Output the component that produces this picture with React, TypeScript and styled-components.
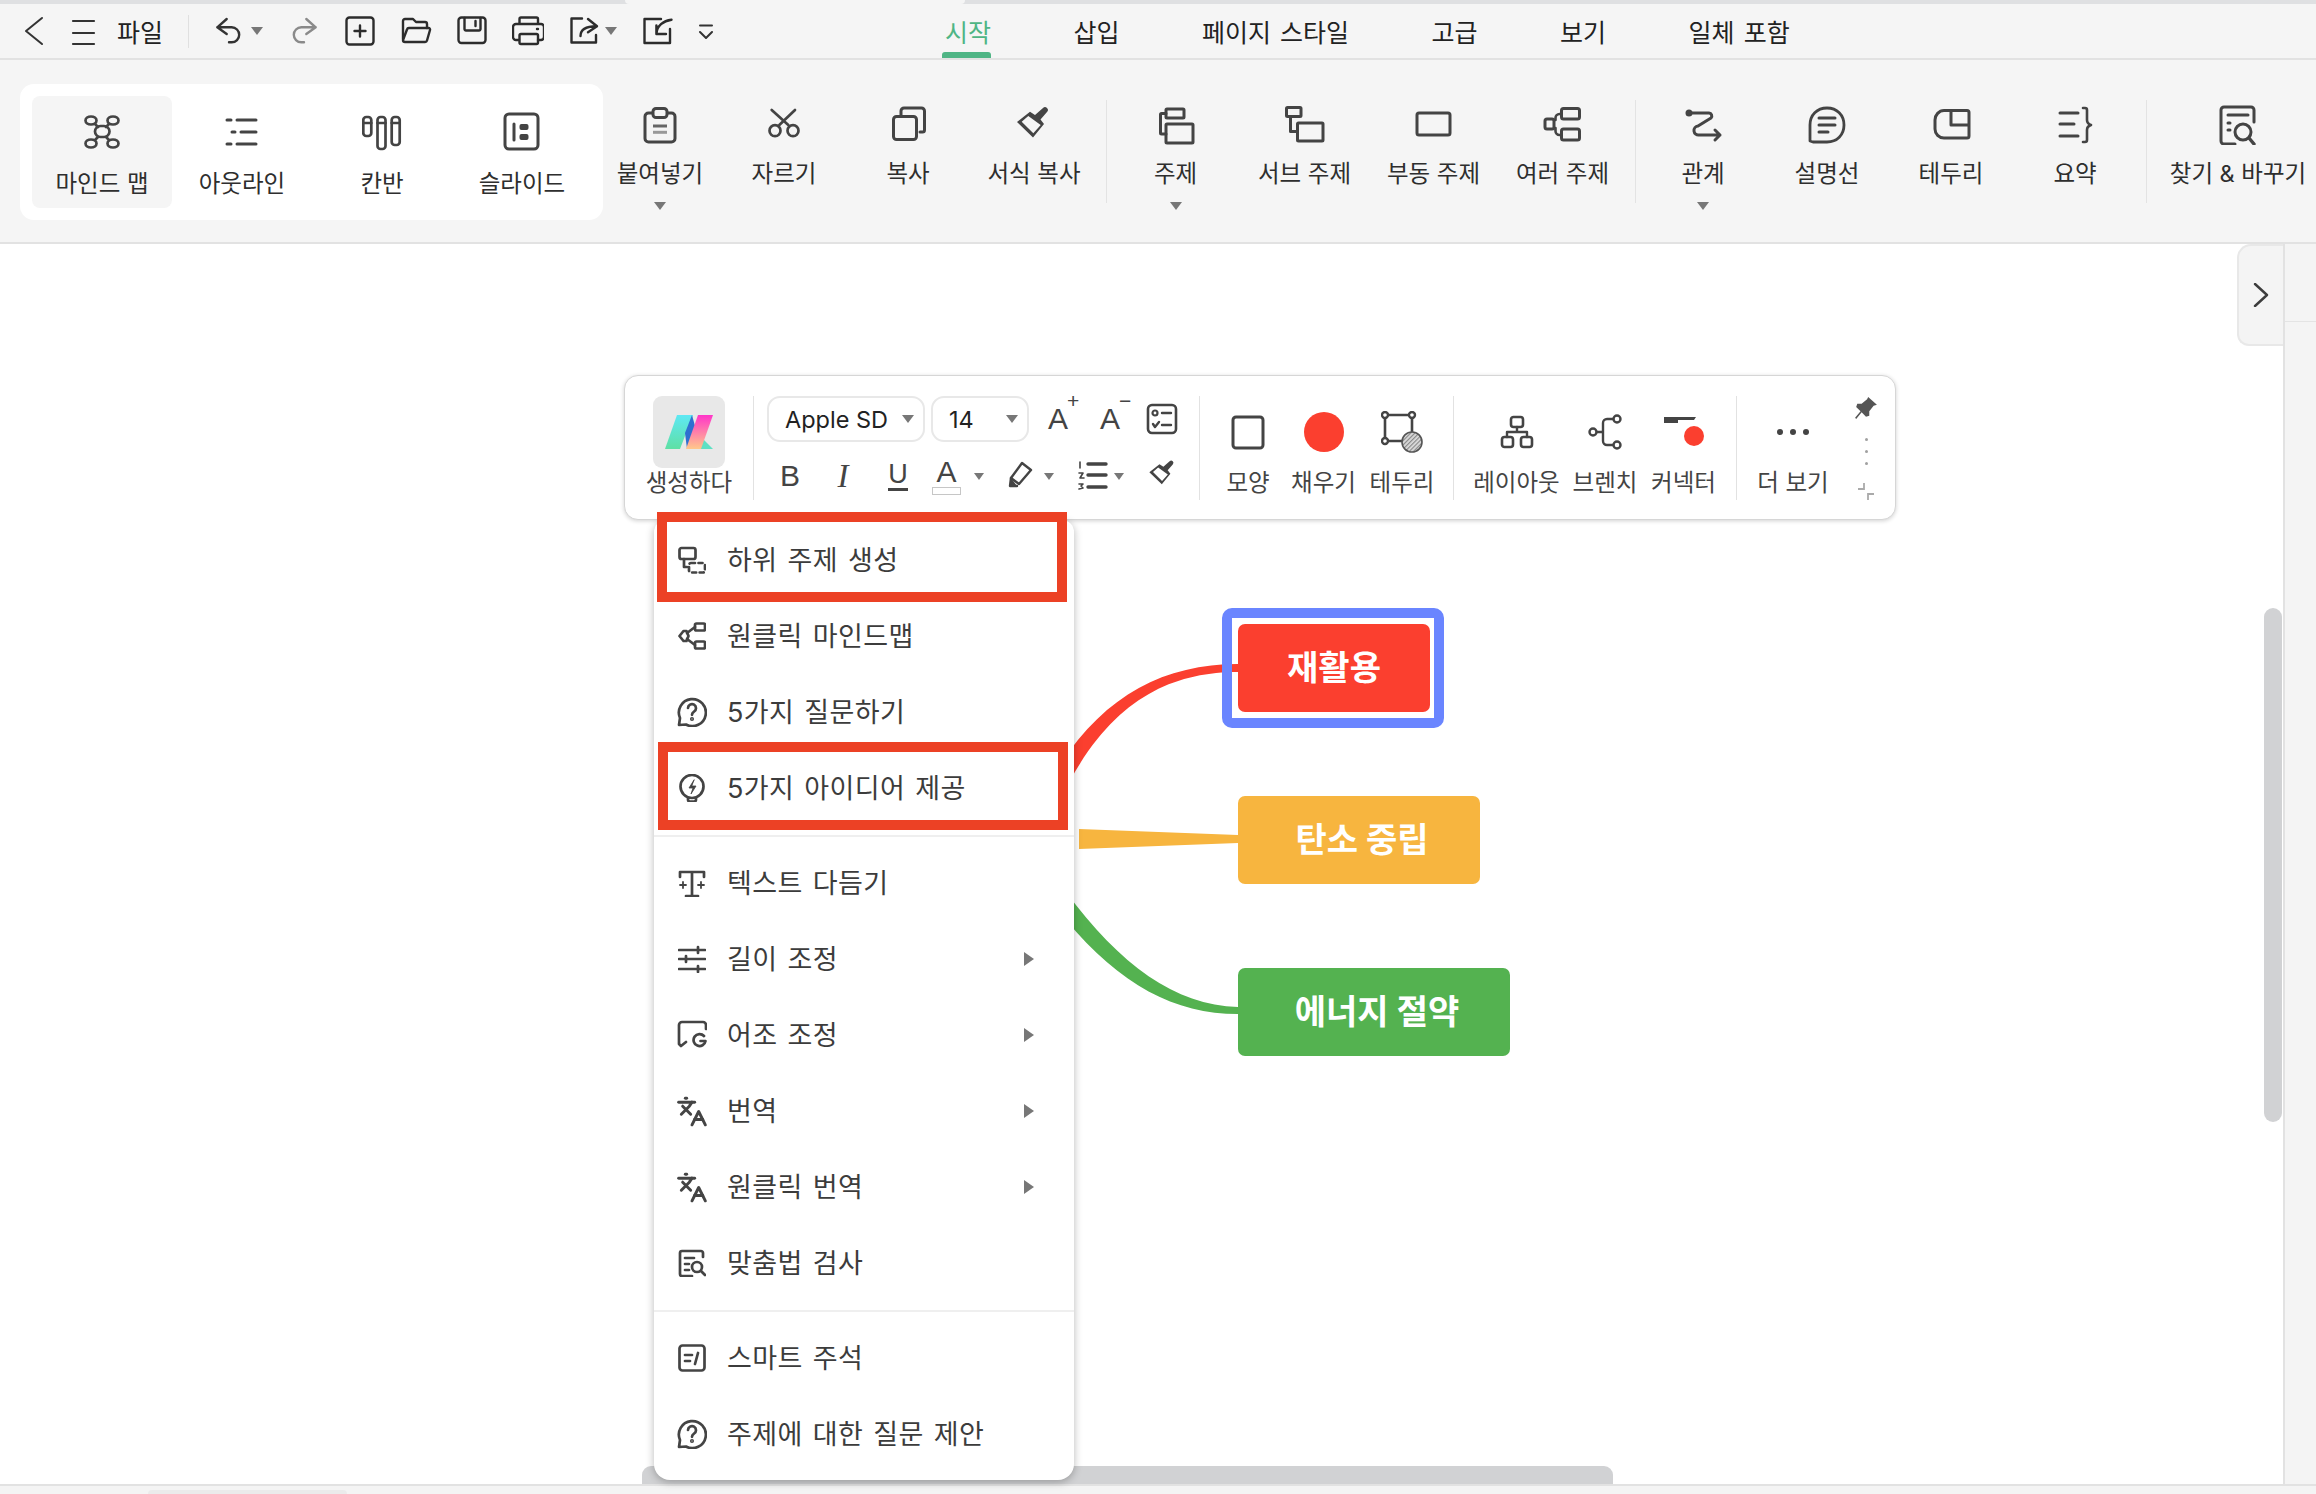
import * as React from "react";
import styled, { createGlobalStyle } from "styled-components";
import { Languages } from "lucide-react";

const GlobalStyle = createGlobalStyle`
  html, body {
    margin: 0;
    padding: 0;
    background: #fff;
    overflow: hidden;
  }
  * {
    box-sizing: border-box;
  }
  body {
    font-family: Inter, "Noto Sans CJK KR", sans-serif;
  }
`;

const Page = styled.div`
  display: flex;
  flex-direction: column;
  width: 2316px;
  height: 1494px;
  overflow: hidden;
`;

const TopStrip = styled.div`
  height: 4px;
  padding-left: 625px;
  background: #dfe0e2;
`;

const TopStripTab = styled.div`
  width: 340px;
  height: 4px;
  background: #f5f5f5;
  border-radius: 0 0 6px 6px;
`;

const MenuBar = styled.header`
  display: flex;
  align-items: center;
  height: 56px;
  padding-left: 8px;
  background: #f5f5f5;
  border-bottom: 2px solid #e2e2e2;
`;

const Slot = styled.div<{ $w: number; $ml?: number }>`
  display: flex;
  flex: none;
  align-items: center;
  justify-content: center;
  width: ${p => p.$w}px;
  margin-left: ${p => p.$ml || 0}px;
`;

const FileText = styled.span`
  font-size: 25px;
  color: #222;
`;

const MenuSep = styled.div`
  flex: none;
  width: 1px;
  height: 33px;
  margin-left: 18px;
  background: #e0e0e0;
`;

const Tabs = styled.nav`
  display: flex;
  gap: 82.5px;
  height: 100%;
  margin-left: 218px;
`;

const Tab = styled.div<{ $active?: boolean }>`
  position: relative;
  display: flex;
  align-items: center;
  height: 100%;
  font-size: 25px;
  word-spacing: 2px;
  white-space: nowrap;
  color: ${p => (p.$active ? "#4fb585" : "#222")};
  &::after {
    content: "";
    display: ${p => (p.$active ? "block" : "none")};
    position: absolute;
    left: -3px;
    right: 0;
    bottom: 0;
    height: 6px;
    border-radius: 3px 3px 0 0;
    background: #4fb585;
  }
`;

const Ribbon = styled.section`
  display: flex;
  align-items: flex-start;
  flex: none;
  height: 184px;
  padding-left: 20px;
  background: #f5f5f5;
  border-bottom: 2px solid #e2e2e2;
`;

const ModePanel = styled.div`
  display: flex;
  flex: none;
  width: 583px;
  height: 136px;
  margin: 24px -5px 0 0;
  padding: 12px;
  background: #fff;
  border-radius: 14px;
`;

const ModeItem = styled.div<{ $active?: boolean }>`
  display: flex;
  flex: none;
  flex-direction: column;
  align-items: center;
  width: 140px;
  height: 112px;
  padding-top: 16px;
  border-radius: 8px;
  background: ${p => (p.$active ? "#f5f5f5" : "transparent")};
`;

const RibbonItem = styled.div<{ $w: number }>`
  display: flex;
  flex: none;
  flex-direction: column;
  align-items: center;
  width: ${p => p.$w}px;
  padding-top: 45px;
`;

const RibbonIcon = styled.div`
  display: flex;
  align-items: center;
  justify-content: center;
  height: 40px;
`;

const RibbonLabel = styled.div<{ $mt?: number }>`
  margin-top: ${p => p.$mt || 15}px;
  font-size: 23.5px;
  line-height: 28px;
  white-space: nowrap;
  color: #2e2e2e;
`;

const RibbonSep = styled.div<{ $ml: number; $mr: number }>`
  flex: none;
  width: 1px;
  height: 103px;
  margin: 40px ${p => p.$mr}px 0 ${p => p.$ml}px;
  background: #e3e3e3;
`;

const Caret = styled.span<{ $mt?: number; $ml?: number; $size?: number }>`
  display: inline-block;
  flex: none;
  width: 0;
  height: 0;
  margin-top: ${p => p.$mt || 0}px;
  margin-left: ${p => p.$ml || 0}px;
  border-left: ${p => p.$size || 6}px solid transparent;
  border-right: ${p => p.$size || 6}px solid transparent;
  border-top: ${p => (p.$size || 6) + 2}px solid #777;
`;

const Body = styled.div`
  display: flex;
  flex: 1;
  min-height: 0;
`;

const Canvas = styled.main`
  position: relative;
  flex: 1;
  background: #fff;
`;

const SidePanel = styled.aside`
  flex: none;
  width: 33px;
  background: #f4f4f4;
  border-left: 2px solid #e2e2e2;
`;

const SideTop = styled.div`
  height: 78px;
  border-bottom: 1px solid #e4e4e4;
`;

const CollapseTab = styled.div`
  position: absolute;
  top: 0;
  right: 0;
  display: flex;
  align-items: center;
  justify-content: center;
  width: 46px;
  height: 102px;
  background: #f4f4f4;
  border: 2px solid #e8e8e8;
  border-right: 0;
  border-radius: 14px 0 0 12px;
`;

const VScroll = styled.div`
  position: absolute;
  top: 364px;
  right: 1px;
  width: 18px;
  height: 514px;
  border-radius: 9px;
  background: #d1d2d4;
`;

const HScroll = styled.div`
  position: absolute;
  left: 642px;
  bottom: 0;
  width: 971px;
  height: 18px;
  border-radius: 9px 9px 0 0;
  background: #d1d2d4;
`;

const StatusBar = styled.footer`
  flex: none;
  height: 10px;
  padding: 4px 0 0 148px;
  background: #f4f4f4;
  border-top: 2px solid #e2e2e2;
`;

const StatusTab = styled.div`
  width: 199px;
  height: 4px;
  border-radius: 4px 4px 0 0;
  background: #ebebeb;
`;

const Links = styled.svg`
  position: absolute;
  left: 0;
  top: 0;
`;

const Node = styled.div<{ $x: number; $y: number; $w: number; $bg: string; $pl?: number }>`
  position: absolute;
  left: ${p => p.$x}px;
  top: ${p => p.$y}px;
  display: flex;
  align-items: center;
  justify-content: center;
  width: ${p => p.$w}px;
  height: 88px;
  padding-bottom: 6px;
  padding-left: ${p => p.$pl || 0}px;
  border-radius: 7px;
  background: ${p => p.$bg};
  font-size: 34px;
  font-weight: 700;
  white-space: nowrap;
  color: #fff;
`;

const NodeSelection = styled.div`
  position: absolute;
  left: 1222px;
  top: 364px;
  width: 222px;
  height: 120px;
  border: 10px solid #6a85ff;
  border-radius: 10px;
`;

const FloatBar = styled.div`
  position: absolute;
  left: 624px;
  top: 131px;
  display: flex;
  width: 1272px;
  height: 145px;
  padding-top: 20px;
  background: #fff;
  border: 1px solid #d6d6d6;
  border-radius: 14px;
  box-shadow: 0 1px 4px rgba(0, 0, 0, 0.18);
`;

const LogoCol = styled.div`
  display: flex;
  flex: none;
  flex-direction: column;
  align-items: center;
  width: 128px;
`;

const LogoBox = styled.div`
  display: flex;
  align-items: center;
  justify-content: center;
  width: 72px;
  height: 72px;
  border-radius: 9px;
  background: #e8e8e8;
`;

const FloatLabel = styled.div`
  margin-top: 1px;
  font-size: 23.5px;
  line-height: 28px;
  white-space: nowrap;
  color: #444;
`;

const FloatSep = styled.div`
  flex: none;
  width: 1px;
  height: 104px;
  background: #e2e2e2;
`;

const FormatCol = styled.div`
  display: flex;
  flex: none;
  flex-direction: column;
  width: 445px;
  padding-left: 13px;
`;

const FormatRow = styled.div<{ $h: number; $mt?: number }>`
  display: flex;
  align-items: center;
  height: ${p => p.$h}px;
  margin-top: ${p => p.$mt || 0}px;
`;

const Select = styled.div<{ $w: number; $mr?: number; $pl: number }>`
  display: flex;
  flex: none;
  align-items: center;
  justify-content: space-between;
  width: ${p => p.$w}px;
  height: 46px;
  margin-right: ${p => p.$mr || 0}px;
  padding: 0 9px 0 ${p => p.$pl}px;
  border: 2px solid #e8e8e8;
  border-radius: 13px;
  font-size: 23.5px;
  color: #222;
`;

const LetterTool = styled.span`
  position: relative;
  font-family: "Liberation Sans", sans-serif;
  font-size: 30px;
  color: #444;
  line-height: 32px;
`;

const LetterMark = styled.sup`
  position: absolute;
  top: -12px;
  left: 19px;
  font-size: 21px;
  line-height: 20px;
`;

const ItalicTool = styled(LetterTool)`
  font-family: "Liberation Serif", serif;
  font-style: italic;
  font-size: 33px;
`;

const UnderTool = styled(LetterTool)`
  font-size: 27px;
  border-bottom: 3px solid #444;
  line-height: 27px;
`;

const ColorTool = styled.div`
  display: flex;
  flex-direction: column;
  align-items: center;
  font-family: "Liberation Sans", sans-serif;
  font-size: 30px;
  line-height: 30px;
  color: #444;
`;

const ColorSwatch = styled.div`
  width: 29px;
  height: 8px;
  border: 1px solid #c6c6c6;
  background: #fff;
`;

const LabelTool = styled.div<{ $w: number }>`
  display: flex;
  flex: none;
  flex-direction: column;
  align-items: center;
  width: ${p => p.$w}px;
`;

const LabelToolIcon = styled.div`
  display: flex;
  align-items: center;
  justify-content: center;
  height: 72px;
`;

const FloatGroup = styled.div`
  display: flex;
  flex: none;
  margin-left: 10px;
  margin-right: 10px;
`;

const PinCol = styled.div`
  display: flex;
  flex: none;
  flex-direction: column;
  align-items: center;
  width: 40px;
  margin-left: -3px;
`;

const GripDots = styled.div`
  display: flex;
  flex-direction: column;
  gap: 9px;
  margin-top: 18px;
`;

const GripDot = styled.span`
  width: 3px;
  height: 3px;
  border-radius: 50%;
  background: #a0a0a0;
`;

const ResizeMark = styled.div`
  margin-top: 17px;
`;

const ContextMenu = styled.div`
  position: absolute;
  left: 654px;
  top: 276px;
  width: 420px;
  height: 960px;
  padding-top: 2px;
  background: #fff;
  border-radius: 12px 12px 16px 16px;
  box-shadow: 0 2px 8px rgba(0, 0, 0, 0.28);
`;

const MenuRow = styled.div`
  display: flex;
  align-items: center;
  height: 76px;
  padding: 0 40px 4px 22px;
  font-size: 27px;
  letter-spacing: 0.4px;
  word-spacing: 2px;
  color: #3c3c3c;
`;

const MenuIcon = styled.div`
  display: flex;
  flex: none;
  align-items: center;
  justify-content: center;
  width: 32px;
  margin-right: 19px;
  padding-top: 4px;
`;

const MenuText = styled.span`
  flex: 1;
  white-space: nowrap;
`;

const SubArrow = styled.span`
  flex: none;
  width: 0;
  height: 0;
  margin-top: 4px;
  border-top: 7px solid transparent;
  border-bottom: 7px solid transparent;
  border-left: 10px solid #777;
`;

const MenuDivider = styled.div`
  height: 2px;
  margin: 9px 0 8px;
  background: #efefef;
`;

const Highlight = styled.div<{ $x: number; $y: number; $h: number }>`
  position: absolute;
  left: ${p => p.$x}px;
  top: ${p => p.$y}px;
  width: 410px;
  height: ${p => p.$h}px;
  border: 10px solid #ec4125;
`;

const Line = styled.svg<{ $color?: string }>`
  display: block;
  flex: none;
  fill: none;
  stroke: ${p => p.$color || "#444"};
  stroke-width: 2.7;
  stroke-linecap: round;
  stroke-linejoin: round;
`;

// ribbon icons, 40px box
const Ic = ({ children, s = 40, color }: { children: React.ReactNode; s?: number; color?: string }) => (
  <Line width={s} height={s} viewBox={`0 0 ${s} ${s}`} $color={color}>
    {children}
  </Line>
);

const MindMapIcon = () => (
  <Ic>
    <ellipse cx="9" cy="8.5" rx="5.5" ry="4" /><ellipse cx="31" cy="8.5" rx="5.5" ry="4" />
    <ellipse cx="9" cy="31.500" rx="5.5" ry="4" /><ellipse cx="31" cy="31.500" rx="5.5" ry="4" />
    <rect x="13" y="14" width="14.500" height="11" rx="5.5" />
    <path d="M13 12l3 3M27 12l-3 3M13 28l3-3M27 28l-3-3" />
  </Ic>
);
const OutlineIcon = () => (
  <Ic>
    <path strokeWidth="3" d="M5 8h4M15 8h19M10 20h3M19 20h15M5 32h4M15 32h19" />
  </Ic>
);
const KanbanIcon = () => (
  <Ic>
    <rect x="1.300" y="5" width="8" height="19" rx="3" /><rect x="15.500" y="5" width="8" height="32" rx="3" /><rect x="29.700" y="5" width="8" height="28" rx="3" />
    <path d="M1.300 11h8M15.500 11h8M29.700 11h8" />
  </Ic>
);
const SlideIcon = () => (
  <Ic>
    <rect x="3" y="2" width="33" height="35" rx="4" strokeWidth="3" />
    <path d="M12 12v16" strokeWidth="3" />
    <rect x="17.500" y="12" width="9" height="6" rx="2" fill="#444" stroke="none" />
    <rect x="17.500" y="22" width="9" height="6" rx="2" fill="#444" stroke="none" />
  </Ic>
);
const PasteIcon = () => (
  <Ic>
    <rect x="5" y="8" width="30" height="29" rx="3.500" strokeWidth="3" />
    <rect x="13" y="3.500" width="14" height="9" rx="3" fill="#f5f5f5" strokeWidth="3" />
    <path d="M13 21h14" stroke="#666" strokeWidth="3" strokeLinecap="butt" />
    <path d="M13 27.300h14" stroke="#999" strokeWidth="3" strokeLinecap="butt" />
  </Ic>
);
const ScissorsIcon = () => (
  <Ic>
    <circle cx="11" cy="25.700" r="5.500" /><circle cx="29" cy="25.700" r="5.500" />
    <path d="M31 5 15.300 20M7.700 5 24.300 20" />
  </Ic>
);
const CopyIcon = () => (
  <Ic>
    <path d="M13 10V6a3 3 0 0 1 3-3h17.500a3 3 0 0 1 3 3v19a2 2 0 0 1-2 2H32" strokeWidth="3" />
    <rect x="5.500" y="11.500" width="23" height="23" rx="3" strokeWidth="3" />
  </Ic>
);
const BrushPath = () => (
  <path
    fill="#444"
    stroke="none"
    fillRule="evenodd"
    d="M3 17 16 6.700 21 10l8-7a2.500 2.500 0 0 1 4 4l-6.500 7.500 3.500 4.500-11 13.500zM7.700 16.700l6.600-5.700 12.400 9-7.400 8.300z"
  />
);
const BrushIcon = () => <Ic><BrushPath /></Ic>;
const TopicIcon = () => (
  <Ic>
    <rect x="10" y="4" width="18" height="9" rx="1" strokeWidth="3" />
    <rect x="10" y="19" width="27" height="19" rx="1" strokeWidth="3" />
    <path d="M10 8.500H5.500a1 1 0 0 0-1 1V28a1 1 0 0 0 1 1H10" strokeWidth="3" />
  </Ic>
);
const SubTopicIcon = () => (
  <Ic>
    <rect x="1.500" y="2.500" width="14.500" height="9" rx="1" strokeWidth="3" />
    <rect x="12.500" y="18" width="25.500" height="18" rx="1" strokeWidth="3" />
    <path d="M5.500 12v14.500h7" strokeWidth="3" />
  </Ic>
);
const FloatIcon = () => <Ic><rect x="3" y="8" width="33" height="22" rx="2" strokeWidth="3" /></Ic>;
const MultiIcon = () => (
  <Ic>
    <rect x="18.500" y="3.500" width="18" height="10.500" rx="2" strokeWidth="3" />
    <rect x="18.500" y="24" width="18" height="11" rx="2" strokeWidth="3" />
    <rect x="2" y="14" width="9" height="10" rx="2" strokeWidth="3" />
    <path d="M18.500 9h-2a4 4 0 0 0-4 4v2M18.500 30h-2a4 4 0 0 1-4-4v-3" strokeWidth="2.6" />
  </Ic>
);
const RelationIcon = () => (
  <Ic>
    <path d="M6 8h20a3 3 0 0 1 2 5l-13 8a4 4 0 0 0 1 9h21M32 25l5 5-5 5" strokeWidth="3" />
    <circle cx="6" cy="8" r="3.500" fill="#444" stroke="none" />
  </Ic>
);
const CalloutIcon = () => (
  <Ic>
    <path d="M3 36V20C3 10 10 3 20 3s17 7 17 17-7 17-17 17H6z" strokeWidth="2.8" />
    <path d="M12 13h16M12 20h16M12 27h9" strokeWidth="3" />
  </Ic>
);
const BoundaryIcon = () => (
  <Ic>
    <path d="M13 5.500h23a2 2 0 0 1 2 2V31a2 2 0 0 1-2 2H13c-5 0-9-4-9-9v-9c0-5 4-9.500 9-9.500z" strokeWidth="3" />
    <path d="M20 6v14h17" strokeWidth="3" />
  </Ic>
);
const SummaryIcon = () => (
  <Ic>
    <path d="M5 8h18M5 19h14M5 31h18" strokeWidth="3" />
    <path d="M28 3h2a2 2 0 0 1 2 2v10c0 3 1 4 4 5-3 1-4 2-4 5v10a2 2 0 0 1-2 2h-2" strokeWidth="2.6" />
  </Ic>
);
const FindIcon = () => (
  <Ic>
    <path d="M17 39H6a3 3 0 0 1-3-3V5a3 3 0 0 1 3-3h27a3 3 0 0 1 3 3v12" strokeWidth="3" />
    <path d="M10 10h20M10 18h2M10 25h2" strokeWidth="3" />
    <circle cx="25" cy="27" r="8" strokeWidth="3" /><path d="M31 33l5 6" strokeWidth="3.400" />
  </Ic>
);

// title bar icons, 32px box
const BackIcon = () => <Ic s={32} color="#333"><path d="M25 3 9 16l16 13" strokeWidth="2" /></Ic>;
const BurgerIcon = () => <Ic s={32} color="#333"><path d="M5 6h21M5 18h21M5 29h21" strokeWidth="2.200" /></Ic>;
const UndoIcon = () => <Ic s={32} color="#333"><path d="M14.700 4 5.300 12.300 14.700 19M5.300 12.300H19.700a7.500 7.500 0 0 1 0 15H17" strokeWidth="2.400" /></Ic>;
const RedoIcon = () => <Ic s={32} color="#8a8a8a"><path d="M17.300 4 26.700 12.300 17.300 19M26.700 12.300H12.300a7.500 7.500 0 0 0 0 15H15" strokeWidth="2.400" /></Ic>;
const NewIcon = () => <Ic s={32} color="#2c2c2c"><rect x="2.500" y="2.500" width="27" height="27" rx="3" strokeWidth="2.400" /><path d="M16 10.500v11M10.500 16h11" strokeWidth="2.400" /></Ic>;
const FolderIcon = () => (
  <Ic s={32} color="#2c2c2c">
    <path d="M3 24V6a2 2 0 0 1 2-2h8l3 3h9a2 2 0 0 1 2 2v4" strokeWidth="2.400" />
    <path d="M3 25a2 2 0 0 0 2 2h20a2 2 0 0 0 2-1.500L30 15a1.500 1.500 0 0 0-1.500-2H9a2 2 0 0 0-2 1.500z" strokeWidth="2.400" />
  </Ic>
);
const SaveIcon = () => (
  <Ic s={32} color="#2c2c2c">
    <rect x="2.500" y="2.500" width="27" height="25.500" rx="3" strokeWidth="2.400" />
    <path d="M8.500 3v11a1.500 1.500 0 0 0 1.500 1.500h13a1.500 1.500 0 0 0 1.500-1.500V3M19.500 6v5" strokeWidth="2.400" />
  </Ic>
);
const PrintIcon = () => (
  <Ic s={32} color="#2c2c2c">
    <path d="M7.500 9V4A1.500 1.500 0 0 1 9 2.500h15.500A1.500 1.500 0 0 1 26 4v5M7 25H4a3 3 0 0 1-3-3V12a3 3 0 0 1 3-3h25a3 3 0 0 1 3 3v10a3 3 0 0 1-3 3h-3M25 14h1" strokeWidth="2.400" />
    <rect x="7.500" y="19" width="18.500" height="10" rx="1.500" strokeWidth="2.400" />
  </Ic>
);
const ExportIcon = () => (
  <Ic s={32} color="#2c2c2c">
    <path d="M14 3.500H3.500V27.500H28V20" strokeWidth="2.400" />
    <path d="M12.500 21c0-6 4-9.700 16-9.700M20 4l9 7.300-9 6" strokeWidth="2.400" />
  </Ic>
);
const ImportIcon = () => (
  <Ic s={32} color="#2c2c2c">
    <path d="M20 4H3.500V28H29V14" strokeWidth="2.400" />
    <path d="M30.500 4.700c-8 1-15 6-15 14.300M15.400 10.500V19H25" strokeWidth="2.400" />
  </Ic>
);
const MoreDownIcon = () => <Ic s={16} color="#333"><path d="M2 2.500h12M2 9l6 6 6-6" strokeWidth="2" /></Ic>;

// floating toolbar
const LogoIcon = () => (
  <svg width="48" height="34" viewBox="0 0 48 34">
    <defs>
      <linearGradient id="lg1" x1="0" y1="0" x2="0" y2="1"><stop offset="0" stopColor="#5ee8f4" /><stop offset="1" stopColor="#5fe0a4" /></linearGradient>
      <linearGradient id="lg2" x1="0" y1="0" x2="0" y2="1"><stop offset="0" stopColor="#ff35c9" /><stop offset="1" stopColor="#ffc88a" /></linearGradient>
    </defs>
    <polygon points="12,0 28,0 15,34 0,34" fill="url(#lg1)" />
    <polygon points="27,0 33,22 22,34 20,18" fill="#2f6fd0" />
    <polygon points="34,20 48,34 36,34" fill="#5fe0c4" />
    <polygon points="33,0 48,0 36,34 21,34" fill="url(#lg2)" />
  </svg>
);
const ChecklistIcon = () => (
  <Ic s={32}>
    <rect x="2" y="2" width="28" height="28" rx="4" strokeWidth="2.600" />
    <circle cx="9" cy="10" r="2.500" strokeWidth="2.200" />
    <path d="M16 10h9M7 21l2 3 4-5M16 22h9" strokeWidth="2.400" />
  </Ic>
);
const MarkerIcon = () => (
  <Ic s={32}>
    <path d="M18 3l9 7-12 14-8-6z" strokeWidth="2.400" />
    <path d="M7 18l-1 8h7" fill="#444" strokeWidth="2.400" />
  </Ic>
);
const NumListIcon = () => (
  <Ic s={32}>
    <path d="M11 4h18M11 15h18M11 27h18" strokeWidth="3.400" />
    <path d="M3 2v6M2 13h4l-3 5h4M2 24h4l-2 2 2 2-4 1" strokeWidth="1.600" />
  </Ic>
);
const ShapeIcon = () => <Ic s={36}><rect x="3" y="3" width="30" height="31" rx="3" strokeWidth="3" /></Ic>;
const FillIcon = () => (
  <svg width="40" height="40" viewBox="0 0 40 40"><circle cx="20" cy="20" r="20" fill="#fb3f2f" /></svg>
);
const BorderToolIcon = () => (
  <Line width="42" height="42" viewBox="0 0 42 42">
    <defs>
      <pattern id="hatch" width="3" height="3" patternUnits="userSpaceOnUse" patternTransform="rotate(45)">
        <rect width="3" height="3" fill="#ddd" stroke="none" />
        <rect width="1.200" height="3" fill="#888" stroke="none" />
      </pattern>
    </defs>
    <rect x="4" y="4" width="27" height="26" strokeWidth="2.600" />
    <circle cx="4" cy="4" r="3" fill="#fff" strokeWidth="2.400" /><circle cx="31" cy="4" r="3" fill="#fff" strokeWidth="2.400" /><circle cx="4" cy="30" r="3" fill="#fff" strokeWidth="2.400" />
    <circle cx="31" cy="31" r="10" fill="url(#hatch)" stroke="#555" strokeWidth="1.600" />
  </Line>
);
const OrgIcon = () => (
  <Ic s={36}>
    <rect x="12" y="3" width="12" height="10" rx="2.500" strokeWidth="2.600" />
    <rect x="3" y="23" width="11" height="10" rx="2.500" strokeWidth="2.600" />
    <rect x="22" y="23" width="11" height="10" rx="2.500" strokeWidth="2.600" />
    <path d="M18 13v5M8 23v-5h20v5" strokeWidth="2.400" />
  </Ic>
);
const BranchIcon = () => (
  <Ic s={36}>
    <circle cx="6" cy="18" r="3.500" strokeWidth="2.400" /><circle cx="30" cy="5" r="3.500" strokeWidth="2.400" /><circle cx="30" cy="31" r="3.500" strokeWidth="2.400" />
    <path d="M10 18h5M26 5h-6a4 4 0 0 0-4 4v18a4 4 0 0 0 4 4h6" strokeWidth="2.400" />
  </Ic>
);
const ConnectorIcon = () => (
  <svg width="44" height="36" viewBox="0 0 44 36">
    <path d="M2 3h32l-2 3H16v3H2z" fill="#444" />
    <circle cx="32" cy="22" r="10" fill="#fb3f2f" />
  </svg>
);
const DotsIcon = () => (
  <svg width="34" height="8" viewBox="0 0 34 8">
    <circle cx="4" cy="4" r="3" fill="#444" /><circle cx="17" cy="4" r="3" fill="#444" /><circle cx="30" cy="4" r="3" fill="#444" />
  </svg>
);
const PinIcon = () => (
  <svg width="24" height="24" viewBox="0 0 22 22">
    <path d="M13 1l8 7-3 1-4 5 0 4-3 1-4-4-5 6-1-1 5-6-4-4 1-3h4l5-4z" fill="#555" />
  </svg>
);
const ResizeIcon = () => (
  <Ic s={20} color="#aaa">
    <path d="M2 7h6V1M12 18v-6h6" strokeWidth="1.800" strokeLinecap="butt" strokeLinejoin="miter" />
  </Ic>
);

// context menu icons, 28px box
const SubCreateIcon = () => (
  <Ic s={28}>
    <rect x="1.500" y="2" width="16" height="11" rx="2" />
    <rect x="11" y="17" width="16" height="9.500" rx="2" strokeDasharray="4 3.500" />
    <path d="M6 13v8h3" />
  </Ic>
);
const OneClickMapIcon = () => (
  <Ic s={28}>
    <path d="M1.500 14l4-5h3l2 5-2 5h-3z" />
    <rect x="17" y="1.500" width="10" height="7" rx="1.500" />
    <rect x="17" y="19.500" width="10" height="7" rx="1.500" />
    <path d="M9 11l8-6M9 17l8 6" />
  </Ic>
);
const AskIcon = () => (
  <Ic s={30}>
    <path d="M2 28l1-7a13.500 13.500 0 1 1 6 6.500z" />
    <path d="M11 11a4 4 0 1 1 6 3.600c-1.300.8-2 1.400-2 3.200" />
    <circle cx="15" cy="22" r="0.700" fill="#444" />
  </Ic>
);
const BulbIcon = () => (
  <Ic s={28}>
    <circle cx="14" cy="12.500" r="11.500" />
    <path d="M10 24v1.500a2 2 0 0 0 2 2h4a2 2 0 0 0 2-2V24" />
    <path d="M16 6l-5 8h4l-2 6 5-8h-4z" fill="#444" strokeWidth="0.800" />
  </Ic>
);
const TextFixIcon = () => (
  <Ic s={28}>
    <path d="M2 8V3h24v5M14 3v24M8 27h12" />
    <path d="M5 13v6M2 16h6M23 13v6M20 16h6" strokeWidth="1.800" />
  </Ic>
);
const SlidersIcon = () => (
  <Ic s={28}>
    <path d="M1 5h26M1 14h26M1 24h26M20 2v6M8 11v6M20 21v6" />
  </Ic>
);
const ToneIcon = () => (
  <Ic s={30}>
    <path d="M29 9V5a3 3 0 0 0-3-3H5a3 3 0 0 0-3 3v19l2 2 5-4" />
    <path d="M27 16a6 6 0 1 0 1.500 5h-5" />
  </Ic>
);
const SpellIcon = () => (
  <Ic s={28}>
    <path d="M25 8V4a2 2 0 0 0-2-2H4a2 2 0 0 0-2 2v21a2 2 0 0 0 2 2h10" />
    <path d="M7 9h9M7 15h4M7 21h4" />
    <circle cx="19" cy="18" r="5" /><path d="M23 22l4 4" strokeWidth="2.800" />
  </Ic>
);
const NoteIcon = () => (
  <Ic s={28}>
    <rect x="1.500" y="1.500" width="25" height="25" rx="3" />
    <path d="M7 11h7M7 17h5M20 9l-3 11" />
  </Ic>
);

const TranslateIcon = () => <Languages size={33} color="#444" strokeWidth={2.2} />;

const ModeItems = [
  { label: "마인드 맵", icon: <MindMapIcon />, active: true },
  { label: "아웃라인", icon: <OutlineIcon /> },
  { label: "칸반", icon: <KanbanIcon /> },
  { label: "슬라이드", icon: <SlideIcon /> },
];

type RibbonEntry = { label: string; icon: React.ReactNode; w: number; caret?: boolean };

const ribbonGroups: { items: RibbonEntry[]; ml: number; mr: number }[] = [
  {
    items: [
      { label: "붙여넣기", icon: <PasteIcon />, w: 124, caret: true },
      { label: "자르기", icon: <ScissorsIcon />, w: 124 },
      { label: "복사", icon: <CopyIcon />, w: 124 },
      { label: "서식 복사", icon: <BrushIcon />, w: 128 },
    ],
    ml: 8,
    mr: 4,
  },
  {
    items: [
      { label: "주제", icon: <TopicIcon />, w: 129, caret: true },
      { label: "서브 주제", icon: <SubTopicIcon />, w: 129 },
      { label: "부동 주제", icon: <FloatIcon />, w: 129 },
      { label: "여러 주제", icon: <MultiIcon />, w: 129 },
    ],
    ml: 8,
    mr: 5,
  },
  {
    items: [
      { label: "관계", icon: <RelationIcon />, w: 124, caret: true },
      { label: "설명선", icon: <CalloutIcon />, w: 124 },
      { label: "테두리", icon: <BoundaryIcon />, w: 124 },
      { label: "요약", icon: <SummaryIcon />, w: 124 },
    ],
    ml: 9,
    mr: 6,
  },
];

type MenuEntry = { label: string; icon: React.ReactNode; sub?: boolean };

const menuGroups: MenuEntry[][] = [
  [
    { label: "하위 주제 생성", icon: <SubCreateIcon /> },
    { label: "원클릭 마인드맵", icon: <OneClickMapIcon /> },
    { label: "5가지 질문하기", icon: <AskIcon /> },
    { label: "5가지 아이디어 제공", icon: <BulbIcon /> },
  ],
  [
    { label: "텍스트 다듬기", icon: <TextFixIcon /> },
    { label: "길이 조정", icon: <SlidersIcon />, sub: true },
    { label: "어조 조정", icon: <ToneIcon />, sub: true },
    { label: "번역", icon: <TranslateIcon />, sub: true },
    { label: "원클릭 번역", icon: <TranslateIcon />, sub: true },
    { label: "맞춤법 검사", icon: <SpellIcon /> },
  ],
  [
    { label: "스마트 주석", icon: <NoteIcon /> },
    { label: "주제에 대한 질문 제안", icon: <AskIcon /> },
  ],
];

const RibbonBlock = ({ entry }: { entry: RibbonEntry }) => (
  <RibbonItem $w={entry.w}>
    <RibbonIcon>{entry.icon}</RibbonIcon>
    <RibbonLabel>{entry.label}</RibbonLabel>
    {entry.caret && <Caret $mt={14} />}
  </RibbonItem>
);

export default function App() {
  return (
    <Page>
      <GlobalStyle />
      <TopStrip>
        <TopStripTab />
      </TopStrip>
      <MenuBar>
        <Slot $w={50}><BackIcon /></Slot>
        <Slot $w={52}><BurgerIcon /></Slot>
        <Slot $w={60}><FileText>파일</FileText></Slot>
        <MenuSep />
        <Slot $w={56} $ml={11}><UndoIcon /></Slot>
        <Slot $w={12} $ml={-5}><Caret /></Slot>
        <Slot $w={56} $ml={14}><RedoIcon /></Slot>
        <Slot $w={56} $ml={-1}><NewIcon /></Slot>
        <Slot $w={56}><FolderIcon /></Slot>
        <Slot $w={56}><SaveIcon /></Slot>
        <Slot $w={56}><PrintIcon /></Slot>
        <Slot $w={56}><ExportIcon /></Slot>
        <Slot $w={12} $ml={-7}><Caret /></Slot>
        <Slot $w={56} $ml={12}><ImportIcon /></Slot>
        <Slot $w={42}><MoreDownIcon /></Slot>
        <Tabs>
          <Tab $active>시작</Tab>
          <Tab>삽입</Tab>
          <Tab>페이지 스타일</Tab>
          <Tab>고급</Tab>
          <Tab>보기</Tab>
          <Tab>일체 포함</Tab>
        </Tabs>
      </MenuBar>

      <Ribbon>
        <ModePanel>
          {ModeItems.map(m => (
            <ModeItem key={m.label} $active={m.active}>
              <RibbonIcon>{m.icon}</RibbonIcon>
              <RibbonLabel $mt={18}>{m.label}</RibbonLabel>
            </ModeItem>
          ))}
        </ModePanel>
        {ribbonGroups.map(g => (
          <React.Fragment key={g.items[0].label}>
            {g.items.map(entry => (
              <RibbonBlock key={entry.label} entry={entry} />
            ))}
            <RibbonSep $ml={g.ml} $mr={g.mr} />
          </React.Fragment>
        ))}
        <RibbonBlock entry={{ label: "찾기 & 바꾸기", icon: <FindIcon />, w: 170 }} />
      </Ribbon>

      <Body>
        <Canvas>
          <Links width="2283" height="1240" viewBox="0 244 2283 1240">
            <path d="M1238 664C1165 664 1105 695 1060 765L1060 800C1108 700 1170 672 1238 672Z" fill="#fb3f2f" />
            <path d="M1238 835L1079 829L1079 849L1238 843Z" fill="#f7b53f" />
            <path d="M1238 1007C1175 1005 1120 965 1066 892L1066 920C1120 985 1175 1014 1238 1014Z" fill="#54b250" />
          </Links>
          <NodeSelection />
          <Node $x={1238} $y={380} $w={192} $bg="#fb3f2f">재활용</Node>
          <Node $x={1238} $y={552} $w={242} $bg="#f7b53f" $pl={6}>탄소 중립</Node>
          <Node $x={1238} $y={724} $w={272} $bg="#54b250" $pl={6}>에너지 절약</Node>

          <VScroll />
          <HScroll />
          <CollapseTab>
            <Ic s={24} color="#3c3c3c"><path d="M6 1l12 11L6 23" strokeWidth="2.400" /></Ic>
          </CollapseTab>

          <FloatBar>
            <LogoCol>
              <LogoBox><LogoIcon /></LogoBox>
              <FloatLabel>생성하다</FloatLabel>
            </LogoCol>
            <FloatSep />
            <FormatCol>
              <FormatRow $h={46}>
                <Select $w={158} $mr={6} $pl={16}>Apple SD<Caret $size={6} /></Select>
                <Select $w={98} $pl={16}>14<Caret $size={6} /></Select>
                <Slot $w={58}><LetterTool>A<LetterMark>+</LetterMark></LetterTool></Slot>
                <Slot $w={46}><LetterTool>A<LetterMark>−</LetterMark></LetterTool></Slot>
                <Slot $w={58}><ChecklistIcon /></Slot>
              </FormatRow>
              <FormatRow $h={36} $mt={16}>
                <Slot $w={46}><LetterTool>B</LetterTool></Slot>
                <Slot $w={60}><ItalicTool>I</ItalicTool></Slot>
                <Slot $w={50}><UnderTool>U</UnderTool></Slot>
                <Slot $w={47}><ColorTool>A<ColorSwatch /></ColorTool></Slot>
                <Slot $w={18}><Caret $size={5} /></Slot>
                <Slot $w={40} $ml={12}><MarkerIcon /></Slot>
                <Slot $w={18}><Caret $size={5} /></Slot>
                <Slot $w={35} $ml={17}><NumListIcon /></Slot>
                <Slot $w={18}><Caret $size={5} /></Slot>
                <Slot $w={68}><Ic color="#444"><g transform="translate(5 3) scale(.78)"><BrushPath /></g></Ic></Slot>
              </FormatRow>
            </FormatCol>
            <FloatSep />
            <FloatGroup>
              <LabelTool $w={76}><LabelToolIcon><ShapeIcon /></LabelToolIcon><FloatLabel>모양</FloatLabel></LabelTool>
              <LabelTool $w={75}><LabelToolIcon><FillIcon /></LabelToolIcon><FloatLabel>채우기</FloatLabel></LabelTool>
              <LabelTool $w={82}><LabelToolIcon><BorderToolIcon /></LabelToolIcon><FloatLabel>테두리</FloatLabel></LabelTool>
            </FloatGroup>
            <FloatSep />
            <FloatGroup>
              <LabelTool $w={105}><LabelToolIcon><OrgIcon /></LabelToolIcon><FloatLabel>레이아웃</FloatLabel></LabelTool>
              <LabelTool $w={72}><LabelToolIcon><BranchIcon /></LabelToolIcon><FloatLabel>브렌치</FloatLabel></LabelTool>
              <LabelTool $w={85}><LabelToolIcon><ConnectorIcon /></LabelToolIcon><FloatLabel>커넥터</FloatLabel></LabelTool>
            </FloatGroup>
            <FloatSep />
            <FloatGroup>
              <LabelTool $w={92}><LabelToolIcon><DotsIcon /></LabelToolIcon><FloatLabel>더 보기</FloatLabel></LabelTool>
            </FloatGroup>
            <PinCol>
              <PinIcon />
              <GripDots><GripDot /><GripDot /><GripDot /></GripDots>
              <ResizeMark><ResizeIcon /></ResizeMark>
            </PinCol>
          </FloatBar>

          <ContextMenu>
            {menuGroups.map((group, i) => (
              <React.Fragment key={group[0].label}>
                {i > 0 && <MenuDivider />}
                {group.map(item => (
                  <MenuRow key={item.label}>
                    <MenuIcon>{item.icon}</MenuIcon>
                    <MenuText>{item.label}</MenuText>
                    {item.sub && <SubArrow />}
                  </MenuRow>
                ))}
              </React.Fragment>
            ))}
            <Highlight $x={3} $y={-8} $h={90} />
            <Highlight $x={4} $y={222} $h={88} />
          </ContextMenu>
        </Canvas>
        <SidePanel>
          <SideTop />
        </SidePanel>
      </Body>
      <StatusBar>
        <StatusTab />
      </StatusBar>
    </Page>
  );
}
